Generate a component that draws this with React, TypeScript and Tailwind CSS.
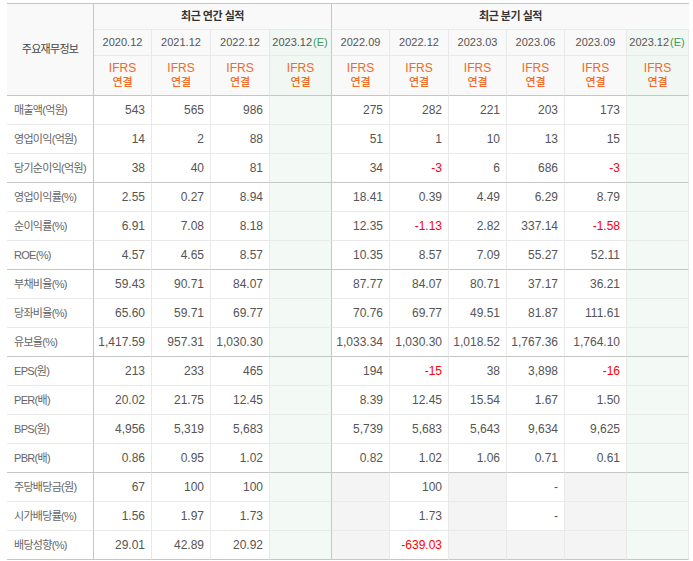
import React from 'react';

type Row = {
  label: string;
  annual: string[];
  quarter: (string | null)[];
  groupEnd?: boolean;
};

const rows: Row[] = [
  { label: '매출액(억원)', annual: ['543', '565', '986'], quarter: ['275', '282', '221', '203', '173'] },
  { label: '영업이익(억원)', annual: ['14', '2', '88'], quarter: ['51', '1', '10', '13', '15'] },
  { label: '당기순이익(억원)', annual: ['38', '40', '81'], quarter: ['34', '-3', '6', '686', '-3'], groupEnd: true },
  { label: '영업이익률(%)', annual: ['2.55', '0.27', '8.94'], quarter: ['18.41', '0.39', '4.49', '6.29', '8.79'] },
  { label: '순이익률(%)', annual: ['6.91', '7.08', '8.18'], quarter: ['12.35', '-1.13', '2.82', '337.14', '-1.58'] },
  { label: 'ROE(%)', annual: ['4.57', '4.65', '8.57'], quarter: ['10.35', '8.57', '7.09', '55.27', '52.11'], groupEnd: true },
  { label: '부채비율(%)', annual: ['59.43', '90.71', '84.07'], quarter: ['87.77', '84.07', '80.71', '37.17', '36.21'] },
  { label: '당좌비율(%)', annual: ['65.60', '59.71', '69.77'], quarter: ['70.76', '69.77', '49.51', '81.87', '111.61'] },
  { label: '유보율(%)', annual: ['1,417.59', '957.31', '1,030.30'], quarter: ['1,033.34', '1,030.30', '1,018.52', '1,767.36', '1,764.10'], groupEnd: true },
  { label: 'EPS(원)', annual: ['213', '233', '465'], quarter: ['194', '-15', '38', '3,898', '-16'] },
  { label: 'PER(배)', annual: ['20.02', '21.75', '12.45'], quarter: ['8.39', '12.45', '15.54', '1.67', '1.50'] },
  { label: 'BPS(원)', annual: ['4,956', '5,319', '5,683'], quarter: ['5,739', '5,683', '5,643', '9,634', '9,625'] },
  { label: 'PBR(배)', annual: ['0.86', '0.95', '1.02'], quarter: ['0.82', '1.02', '1.06', '0.71', '0.61'], groupEnd: true },
  { label: '주당배당금(원)', annual: ['67', '100', '100'], quarter: [null, '100', null, '-', null] },
  { label: '시가배당률(%)', annual: ['1.56', '1.97', '1.73'], quarter: [null, '1.73', null, '-', null] },
  { label: '배당성향(%)', annual: ['29.01', '42.89', '20.92'], quarter: [null, '-639.03', null, null, null], groupEnd: true },
];

const annualYears = ['2020.12', '2021.12', '2022.12'];
const quarterYears = ['2022.09', '2022.12', '2023.03', '2023.06', '2023.09'];

const isNeg = (v: string) => v.startsWith('-') && v.length > 1;

const Ifrs = ({ est = false, darkRight = false }: { est?: boolean; darkRight?: boolean }) => (
  <div
    className={`flex flex-col items-center justify-center border-r border-b border-b-[#c6c6c6] text-[#f26a24] ${
      darkRight ? 'border-r-[#c6c6c6]' : 'border-r-[#e9e9e9]'
    } ${est ? 'bg-[#f1f7f2]' : 'bg-[#f9f9f9]'}`}
  >
    <span className="text-[12px] leading-[13px]">IFRS</span>
    <span className="text-[11px] leading-[14px] font-medium">연결</span>
  </div>
);

const Year = ({ y, est = false, darkRight = false }: { y: string; est?: boolean; darkRight?: boolean }) => (
  <div
    className={`flex items-center justify-center border-r border-b border-b-[#e9e9e9] text-[11px] text-[#555] ${
      est ? 'bg-[#f1f7f2]' : 'bg-[#f9f9f9]'
    } ${darkRight ? 'border-r-[#c6c6c6]' : 'border-r-[#e9e9e9]'}`}
  >
    {y}
    {est && <span className="px-[1px] text-[#3f9a5c]">(E)</span>}
  </div>
);

const Cell = ({
  v,
  est = false,
  empty = false,
  darkRight = false,
  groupEnd = false,
}: {
  v?: string | null;
  est?: boolean;
  empty?: boolean;
  darkRight?: boolean;
  groupEnd?: boolean;
}) => (
  <div
    className={`flex items-center justify-end border-r border-b pr-[6px] text-[12px] ${
      groupEnd ? 'border-b-[#c6c6c6]' : 'border-b-[#e9e9e9]'
    } ${darkRight ? 'border-r-[#c6c6c6]' : 'border-r-[#e9e9e9]'} ${
      est ? 'bg-[#f3f9f4]' : empty ? 'bg-[#f4f4f4]' : 'bg-white'
    } ${v && isNeg(v) ? 'text-[#f00]' : 'text-[#555]'}`}
  >
    {v}
  </div>
);

export default function App() {
  return (
    <div className="bg-white pt-[3px] pl-[7px]" style={{ fontFamily: '"Liberation Sans", "Noto Sans CJK KR", sans-serif' }}>
      <div className="grid w-[682px] grid-cols-[87px_58px_59px_59px_62px_58px_59px_58px_58px_62px_62px] grid-rows-[26px_26px_40px_repeat(16,29px)] border-t border-[#c6c6c6]">
        <div className="row-span-3 flex items-center justify-center border-r border-b border-[#c6c6c6] bg-[#f9f9f9] text-[11px] tracking-[-0.7px] text-[#444]">
          주요재무정보
        </div>
        <div className="col-span-4 flex items-center justify-center border-r border-b border-b-[#e9e9e9] border-r-[#c6c6c6] bg-[#f9f9f9] text-[11px] font-bold tracking-[-0.5px] text-[#333]">
          최근 연간 실적
        </div>
        <div className="col-span-6 flex items-center justify-center border-b border-[#e9e9e9] bg-[#f9f9f9] text-[11px] font-bold tracking-[-0.5px] text-[#333]">
          최근 분기 실적
        </div>

        {annualYears.map((y) => (
          <Year key={`a${y}`} y={y} />
        ))}
        <Year y="2023.12" est darkRight />
        {quarterYears.map((y) => (
          <Year key={`q${y}`} y={y} />
        ))}
        <Year y="2023.12" est />

        <Ifrs />
        <Ifrs />
        <Ifrs />
        <Ifrs est darkRight />
        {quarterYears.map((y) => (
          <Ifrs key={`i${y}`} />
        ))}
        <Ifrs est />

        {rows.map((r) => (
          <React.Fragment key={r.label}>
            <div
              className={`flex items-center whitespace-nowrap border-r border-b border-r-[#c6c6c6] pl-[7px] text-[11px] tracking-[-0.7px] text-[#666] ${
                r.groupEnd ? 'border-b-[#c6c6c6]' : 'border-b-[#e9e9e9]'
              }`}
            >
              {r.label}
            </div>
            {r.annual.map((v, i) => (
              <Cell key={`a${i}`} v={v} groupEnd={r.groupEnd} />
            ))}
            <Cell est darkRight groupEnd={r.groupEnd} />
            {r.quarter.map((v, i) => (
              <Cell key={`q${i}`} v={v} empty={v === null} groupEnd={r.groupEnd} />
            ))}
            <Cell est groupEnd={r.groupEnd} />
          </React.Fragment>
        ))}
      </div>
    </div>
  );
}
